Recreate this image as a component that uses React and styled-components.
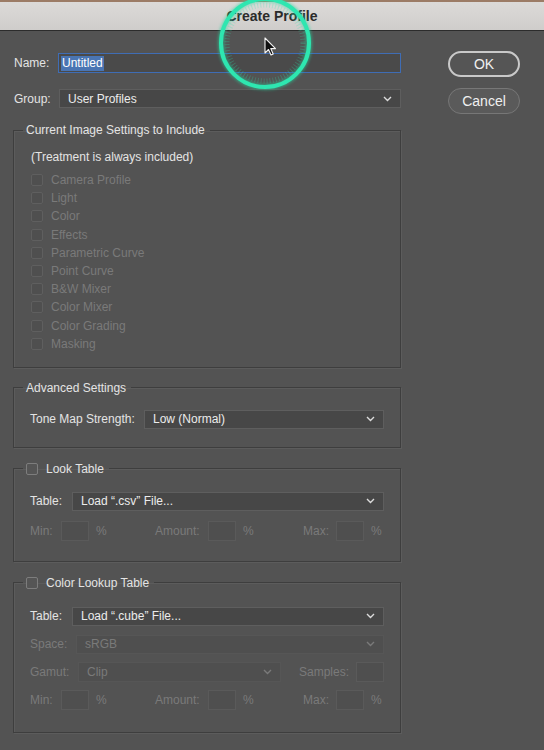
import React from 'react';
import styled, { createGlobalStyle } from 'styled-components';

const GlobalStyle = createGlobalStyle`
  html, body {
    margin: 0;
    padding: 0;
    background: #535353;
  }
  body {
    font-family: "Liberation Sans", Arial, sans-serif;
    font-size: 12px;
    color: #e4e4e4;
  }
`;

const Window = styled.div`
  position: relative;
  width: 544px;
  height: 750px;
  overflow: hidden;
  background: #535353;
`;

const TitleBar = styled.div`
  height: 28px;
  border-top: 2px solid #9c7c66;
  border-bottom: 1px solid #2c2c2c;
  background: linear-gradient(#dcdad8, #cfcdcb);
  display: flex;
  align-items: center;
  justify-content: center;
  font-size: 14px;
  font-weight: bold;
  color: #2b2b2b;
`;

const Body = styled.div`
  display: grid;
  grid-template-columns: 388px 1fr;
  padding: 22px 0 0 13px;
`;

const Main = styled.div`
  display: flex;
  flex-direction: column;
`;

const Side = styled.div`
  display: flex;
  flex-direction: column;
  align-items: flex-start;
  gap: 11px;
  padding: 0 0 0 47px;
  margin-top: -2px;
`;

const PillButton = styled.button`
  width: 72px;
  height: 26px;
  border-radius: 13px;
  font-family: inherit;
  font-size: 14px;
  color: #f0f0f0;
  background: ${({ primary }) => (primary ? '#555555' : '#5a5a5a')};
  border: ${({ primary }) => (primary ? '2px solid #c9c9c9' : '1.5px solid #777')};
  padding: 0;
`;

const TopRow = styled.div`
  display: flex;
  align-items: center;
  height: ${({ h }) => h || 20}px;
  margin-bottom: ${({ mb }) => mb || 0}px;
`;

const Label = styled.span`
  width: ${({ w }) => (w ? `${w}px` : 'auto')};
  flex: ${({ grow }) => (grow ? 1 : 'none')};
  padding-left: ${({ pl }) => pl || 0}px;
  color: ${({ dim }) => (dim ? '#7a7a7a' : '#e4e4e4')};
  white-space: nowrap;
`;

const NameInput = styled.div`
  flex: 1;
  height: 20px;
  box-sizing: border-box;
  border: 1.5px solid #3f6db5;
  background: #4a4a4a;
  display: flex;
  align-items: center;
  padding-left: 2px;
`;

const Selected = styled.span`
  background: #4a75b3;
  color: #fff;
  padding: 0 1px;
  line-height: 15px;
`;

const SelectBox = styled.div`
  flex: ${({ w }) => (w ? 'none' : 1)};
  width: ${({ w }) => (w ? `${w}px` : 'auto')};
  height: ${({ h }) => h || 19}px;
  box-sizing: border-box;
  border: 1px solid ${({ dim }) => (dim ? '#565656' : '#5e5e5e')};
  background: ${({ dim }) => (dim ? '#4f4f4f' : '#474747')};
  display: flex;
  align-items: center;
  justify-content: space-between;
  padding: 0 8px 0 8px;
  color: ${({ dim }) => (dim ? '#7a7a7a' : '#ececec')};
  white-space: nowrap;
`;

const Chevron = ({ dim }) => (
  <svg width="9" height="6" viewBox="0 0 9 6">
    <path d="M1 1 L4.5 4.5 L8 1" fill="none" stroke={dim ? '#7a7a7a' : '#dcdcdc'} strokeWidth="1.4" />
  </svg>
);

const Select = ({ value, dim, w, h }) => (
  <SelectBox dim={dim} w={w} h={h}>
    <span>{value}</span>
    <Chevron dim={dim} />
  </SelectBox>
);

const Group = styled.fieldset`
  margin: ${({ mt }) => mt}px 0 0 0;
  padding: ${({ pt }) => pt}px 16px ${({ pb }) => pb}px 16px;
  border: 1px solid #3e3e3e;
  box-shadow: inset 1px 1px 0 #5c5c5c, 1px 1px 0 #5c5c5c;
  min-width: 0;
  display: flex;
  flex-direction: column;
`;

const Legend = styled.legend`
  margin-left: -7px;
  padding: 0 5px 0 3px;
  line-height: 14px;
  display: flex;
  align-items: center;
  gap: 8px;
  color: #e4e4e4;
`;

const Box = styled.span`
  display: inline-block;
  width: 12px;
  height: 12px;
  box-sizing: border-box;
  border: 1px solid ${({ dim }) => (dim ? '#5f5f5f' : '#7d7d7d')};
  border-radius: 2px;
  background: ${({ dim }) => (dim ? '#4f4f4f' : '#555')};
  flex: none;
`;

const Note = styled.div`
  line-height: 18px;
  padding-left: 1px;
  margin-bottom: 5px;
`;

const CheckRow = styled.div`
  display: flex;
  align-items: center;
  gap: 8px;
  height: 18.2px;
  padding-left: 1px;
  color: #7a7a7a;
`;

const Row = styled.div`
  display: flex;
  align-items: center;
  height: ${({ h }) => h || 19}px;
  margin-top: ${({ mt }) => mt || 0}px;
`;

const SmallField = styled.span`
  width: 28px;
  height: 20px;
  box-sizing: border-box;
  border: 1px solid #5a5a5a;
  background: #4f4f4f;
  flex: none;
`;

const Pct = styled.span`
  color: #7a7a7a;
  margin-left: 7px;
`;

const Cell = styled.div`
  display: flex;
  align-items: center;
  width: ${({ w }) => w}px;
  flex: none;
`;

const Highlight = styled.svg`
  position: absolute;
  left: 213px;
  top: -9px;
  pointer-events: none;
`;

const settings = [
  'Camera Profile',
  'Light',
  'Color',
  'Effects',
  'Parametric Curve',
  'Point Curve',
  'B&W Mixer',
  'Color Mixer',
  'Color Grading',
  'Masking',
];

const RangeRow = ({ mt }) => (
  <Row h={20} mt={mt}>
    <Cell w={125}>
      <Label dim w={31}>Min:</Label>
      <SmallField />
      <Pct>%</Pct>
    </Cell>
    <Cell w={148}>
      <Label dim w={53}>Amount:</Label>
      <SmallField />
      <Pct>%</Pct>
    </Cell>
    <Cell w={80}>
      <Label dim w={33}>Max:</Label>
      <SmallField />
      <Pct>%</Pct>
    </Cell>
  </Row>
);

export default function App() {
  return (
    <Window>
      <GlobalStyle />
      <TitleBar>Create Profile</TitleBar>
      <Body>
        <Main>
          <TopRow mb={16}>
            <Label w={44} pl={1}>Name:</Label>
            <NameInput>
              <Selected>Untitled</Selected>
            </NameInput>
          </TopRow>
          <TopRow h={19}>
            <Label w={45} pl={1}>Group:</Label>
            <Select value="User Profiles" />
          </TopRow>

          <Group mt={15} pt={11} pb={14}>
            <Legend>Current Image Settings to Include</Legend>
            <Note>(Treatment is always included)</Note>
            {settings.map((s) => (
              <CheckRow key={s}>
                <Box dim />
                {s}
              </CheckRow>
            ))}
          </Group>

          <Group mt={13} pt={15} pb={18}>
            <Legend>Advanced Settings</Legend>
            <Row>
              <Label w={114}>Tone Map Strength:</Label>
              <Select value="Low (Normal)" />
            </Row>
          </Group>

          <Group mt={14} pt={16} pb={20}>
            <Legend>
              <Box />
              Look Table
            </Legend>
            <Row>
              <Label w={42}>Table:</Label>
              <Select value={'Load \u201c.csv\u201d File...'} />
            </Row>
            <RangeRow mt={10} />
          </Group>

          <Group mt={14} pt={17} pb={22}>
            <Legend>
              <Box />
              Color Lookup Table
            </Legend>
            <Row>
              <Label w={42}>Table:</Label>
              <Select value={'Load \u201c.cube\u201d File...'} />
            </Row>
            <Row mt={9}>
              <Label dim w={46}>Space:</Label>
              <Select dim value="sRGB" />
            </Row>
            <Row mt={8} h={20}>
              <Label dim w={48}>Gamut:</Label>
              <Select dim w={203} h={20} value="Clip" />
              <Label dim grow pl={18}>Samples:</Label>
              <SmallField />
            </Row>
            <RangeRow mt={8} />
          </Group>
        </Main>
        <Side>
          <PillButton primary>OK</PillButton>
          <PillButton>Cancel</PillButton>
        </Side>
      </Body>

      <Highlight width="110" height="110" viewBox="0 0 110 110">
        <defs>
          <filter id="glow" x="-20%" y="-20%" width="140%" height="140%">
            <feGaussianBlur stdDeviation="1.6" />
          </filter>
        </defs>
        <circle cx="52" cy="52" r="44" fill="none" stroke="#22d9a0" strokeWidth="6" opacity="0.55" filter="url(#glow)" />
        <circle cx="52" cy="52" r="44" fill="none" stroke="#2ee6b0" strokeWidth="4" />
        <circle cx="52" cy="52" r="38" fill="none" stroke="#2ee6b0" strokeWidth="5" strokeDasharray="1 2" opacity="0.25" />
        <path
          d="M52 47 L52 62 L55.5 58.5 L58 64 L60.2 63 L57.8 57.6 L62.5 57.6 Z"
          fill="#111"
          stroke="#f4f4f4"
          strokeWidth="1.1"
          strokeLinejoin="round"
        />
      </Highlight>
    </Window>
  );
}
